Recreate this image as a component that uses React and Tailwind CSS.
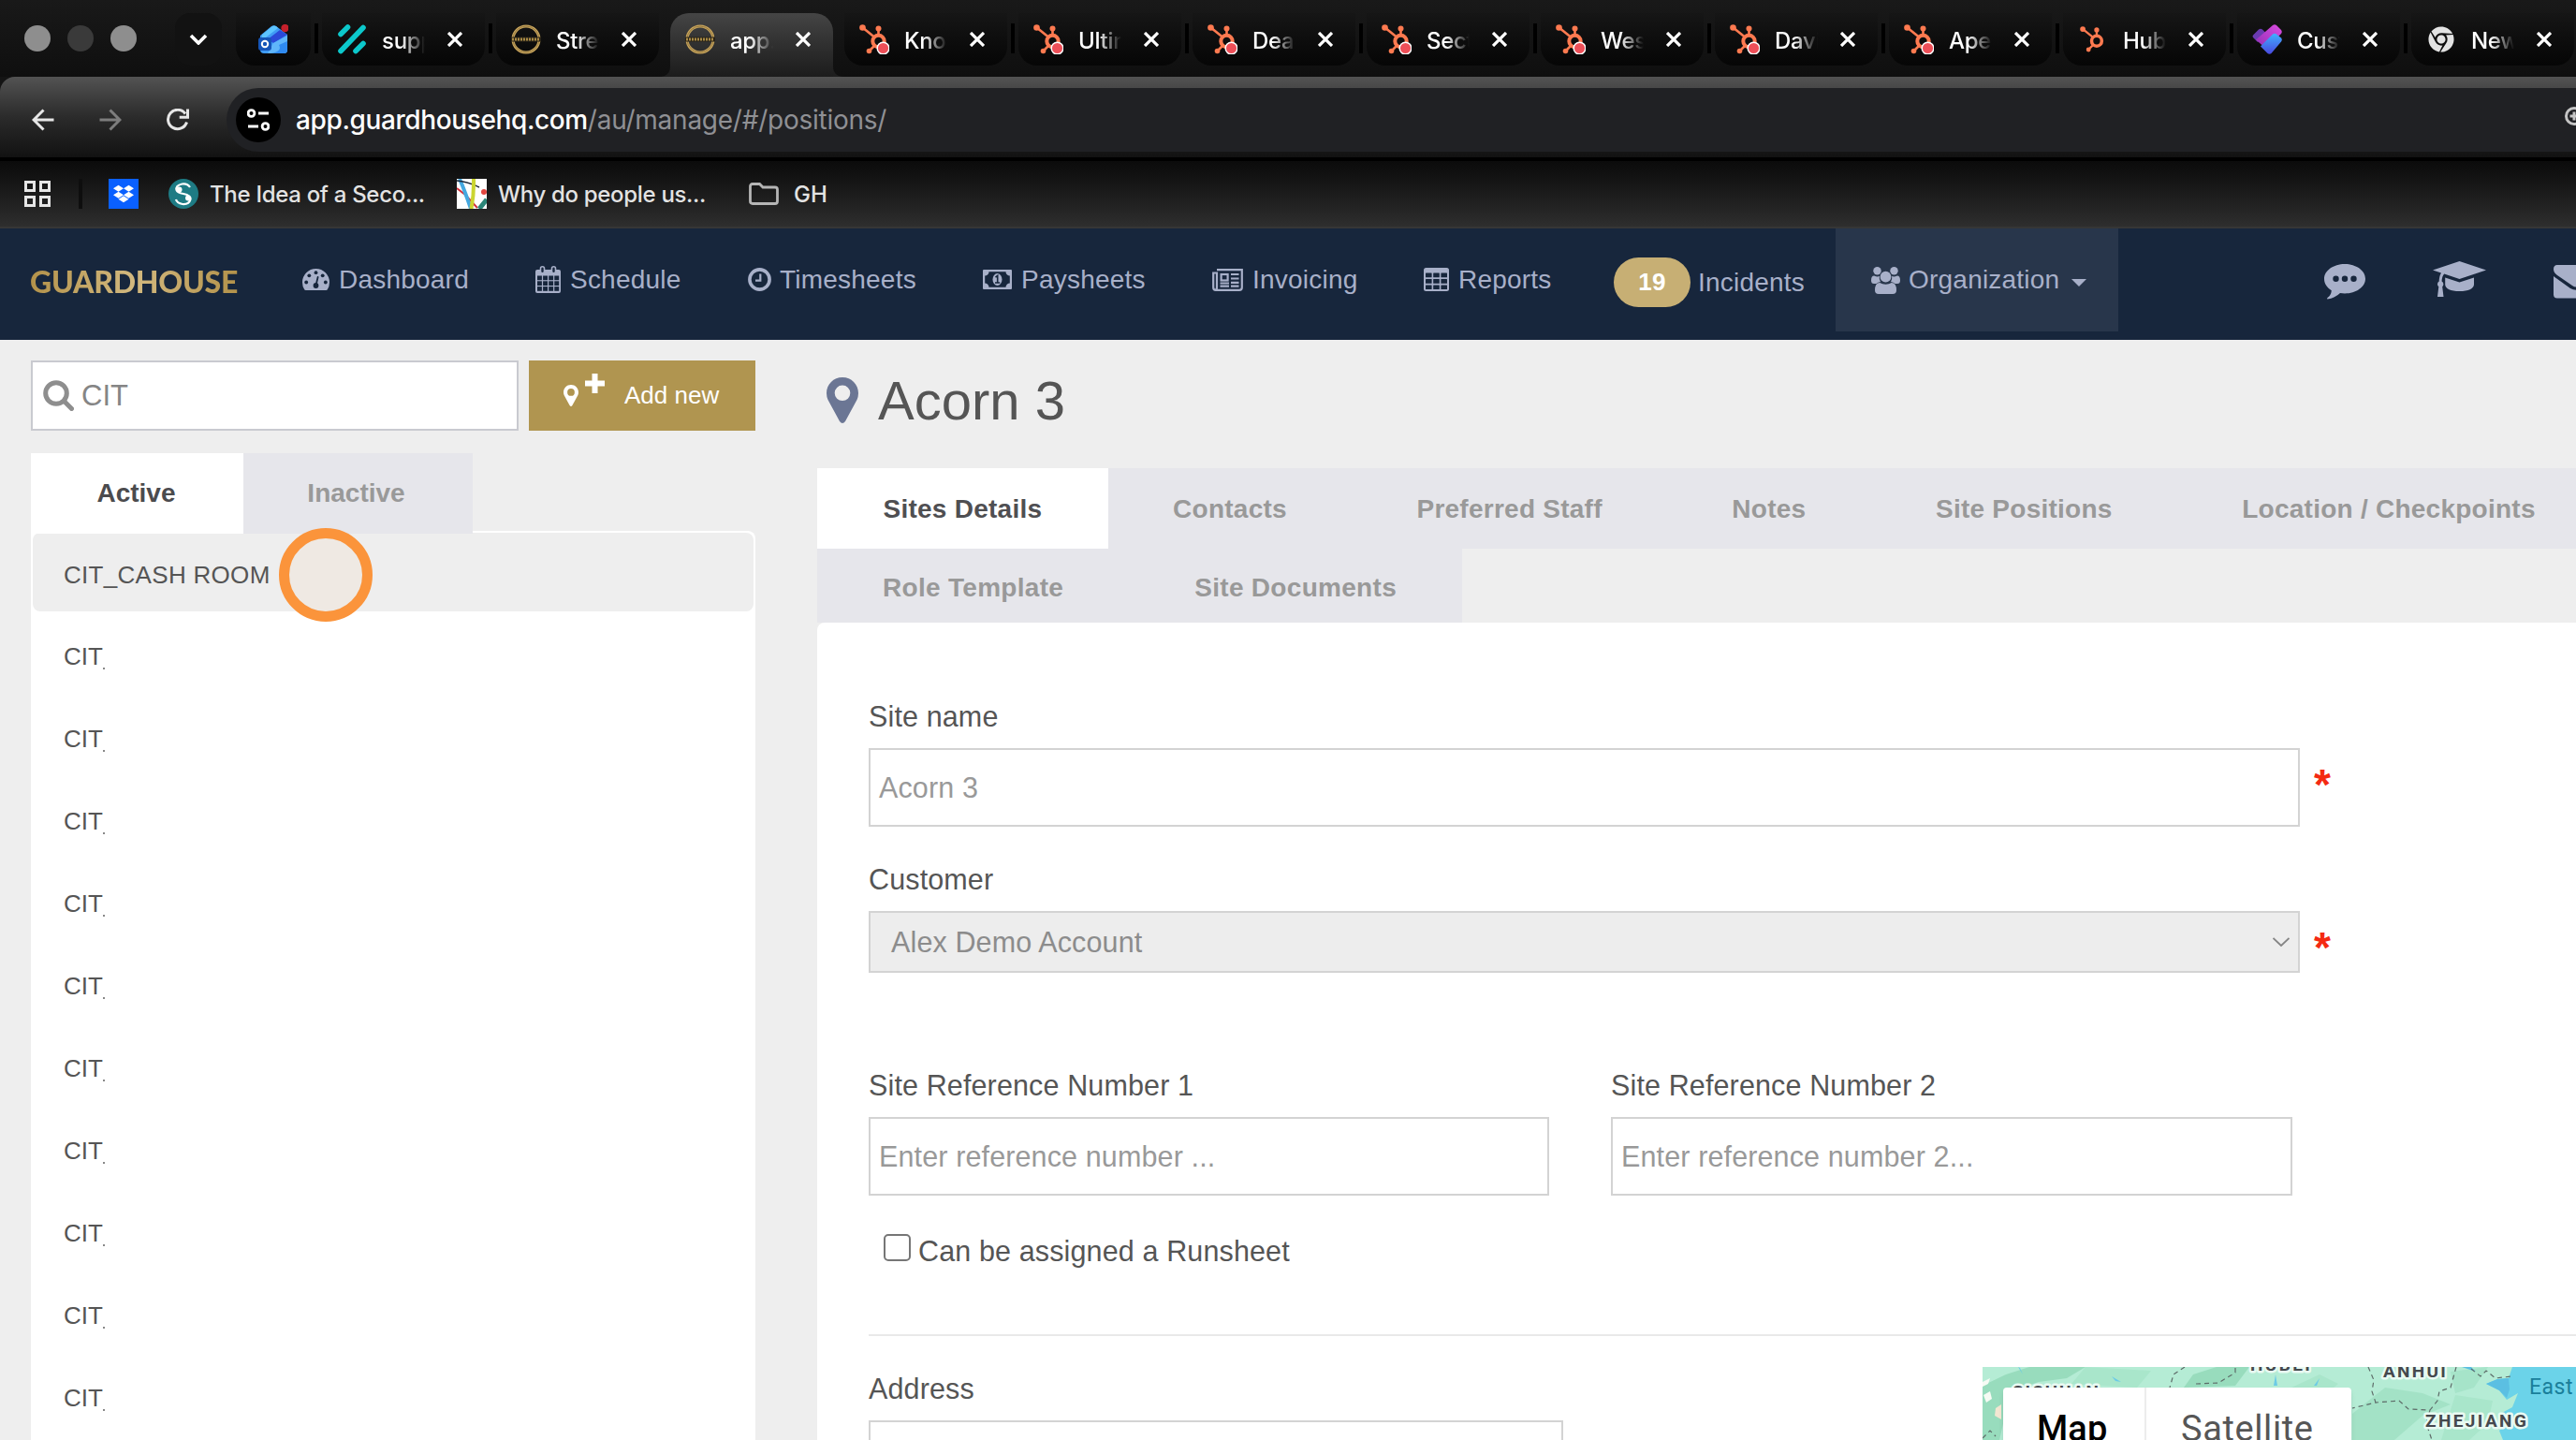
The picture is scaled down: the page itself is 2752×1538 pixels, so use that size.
import clsx from 'clsx';
import { FaChrome, FaDropbox } from 'react-icons/fa';

/* ---------- favicons ---------- */

function OutlookIcon() {
  return (
    <svg className="h-8 w-8" viewBox="0 0 32 32">
      <path d="M2 12 L14 2 Q16.500 0.500 19 2 L31 11 V27 Q31 31 27 31 H6 Q2 31 2 27Z" fill="#3f9bf5" />
      <path d="M4 11 L15 2 Q17 1 19 2 L21 4 L4 17Z" fill="#5cc4ff" />
      <path d="M10 16 L23 6 L31 11 L16 20Z" fill="#2b49d8" />
      <path d="M16 20 L31 12 V27 Q31 31 27 31 H10Z" fill="#5fb5fa" />
      <path d="M13 31 Q26 29 22 22 L31 18 V27 Q31 31 27 31Z" fill="#2f8af0" />
      <rect y="14" width="14" height="14" rx="3" fill="#1555b8" />
      <circle cx="7" cy="21" r="3.200" fill="none" stroke="#fff" strokeWidth="2" />
      <circle cx="28.500" cy="4" r="4.200" fill="#c4202b" />
    </svg>
  );
}

function SlashesIcon() {
  return (
    <svg className="h-8 w-8" viewBox="0 0 32 32" stroke="#0cc8cb" strokeWidth="5.600" strokeLinecap="round">
      <path d="M4 10.500 L11.500 3 M4 28.500 L28 3.500 M20 28.500 L28 20.500" fill="none" />
    </svg>
  );
}

function RingIcon() {
  return (
    <svg className="h-8 w-8" viewBox="0 0 32 32">
      <circle cx="16" cy="16" r="14" fill="none" stroke="#c9a55c" strokeWidth="3" />
      <circle cx="16" cy="16" r="14" fill="none" stroke="#6f5a2f" strokeWidth="0.600" />
      <rect x="0" y="13.500" width="32" height="5" fill="#2a2418" />
      <path d="M1 16 H31" stroke="#a98a45" strokeWidth="3.200" strokeDasharray="2 1" />
    </svg>
  );
}

function HubspotIcon({ unread }) {
  return (
    <svg
      className={unread ? 'h-8 w-8' : 'm-0.5 h-7 w-7'}
      viewBox="0 0 32 32"
      fill="none"
      stroke="#ff7a50"
      strokeWidth="2.600"
    >
      <circle cx="20.500" cy="18" r="6.200" strokeWidth="4" />
      <path d="M3 3 L16 13.500 M20.500 5 V12 M11 28 L16 23" />
      <circle cx="3.500" cy="3.500" r="3.300" fill="#ff7a50" stroke="none" />
      <circle cx="20.500" cy="4.500" r="3" fill="#ff7a50" stroke="none" />
      <circle cx="10.500" cy="28.500" r="2.800" fill="#ff7a50" stroke="none" />
      {unread && <circle cx="25.500" cy="25.500" r="6.300" fill="#ee4f58" stroke="#fff" strokeWidth="1.500" />}
    </svg>
  );
}

function DiamondsIcon() {
  return (
    <svg className="h-8 w-8" viewBox="0 0 32 32">
      <defs>
        <linearGradient id="dPink" x1="0" y1="1" x2="1" y2="0">
          <stop offset="0" stopColor="#8f2fb5" />
          <stop offset="1" stopColor="#dc4be0" />
        </linearGradient>
        <linearGradient id="dBlue" x1="0.500" y1="0" x2="0.500" y2="1">
          <stop offset="0" stopColor="#3fb0ff" />
          <stop offset="1" stopColor="#4a48e0" />
        </linearGradient>
      </defs>
      <path d="M1.500 11 L7 5.500 Q9 4 11 5.500 L15 9.500 L6 19 L1 14 Q-0.200 12.500 1.500 11Z" fill="#6a3bb0" />
      <path d="M22 1 Q24 -0.600 26 1 L31 6 Q32.500 8 31 10 L15 26 L4 16.500Z" fill="url(#dPink)" />
      <path d="M22 10.500 Q24 9 26 10.500 L31 14.500 Q32.500 16.500 31 18.500 L20.500 31 Q18.500 32.500 16.500 31 L9 23.500Z" fill="url(#dBlue)" />
    </svg>
  );
}

/* ---------- nav icons ---------- */

function DashboardIcon() {
  return (
    <svg className="h-[23px] w-[29px]" viewBox="0 0 29 23">
      <path d="M14.500 0 A14.500 14.500 0 0 0 0 14.500 Q0 19 2.200 22.200 Q2.700 23 3.600 23 H25.400 Q26.300 23 26.800 22.200 Q29 19 29 14.500 A14.500 14.500 0 0 0 14.500 0Z" fill="currentColor" />
      <g fill="#17263c">
        <circle cx="4.200" cy="14.500" r="1.900" />
        <circle cx="7.300" cy="7.300" r="1.900" />
        <circle cx="14.500" cy="4.200" r="1.900" />
        <circle cx="21.700" cy="7.300" r="1.900" />
        <circle cx="24.800" cy="14.500" r="1.900" />
        <circle cx="14.500" cy="18" r="2.900" />
      </g>
      <path d="M14.700 17 L16.600 9" stroke="#17263c" strokeWidth="1.800" strokeLinecap="round" />
    </svg>
  );
}

function CalendarIcon() {
  return (
    <svg className="h-[29px] w-[27px]" viewBox="0 0 27 29">
      <path d="M2 4 H25 Q27 4 27 6 V27 Q27 29 25 29 H2 Q0 29 0 27 V6 Q0 4 2 4Z" fill="currentColor" />
      <g fill="#17263c">
        {[10.5, 16.3, 22.1].map((y) =>
          [2, 8.1, 14.2, 20.3].map((x) => (
            <rect key={`${x}-${y}`} x={x} y={y} width="4.900" height="4.700" />
          ))
        )}
      </g>
      <rect x="5.500" y="0.800" width="4" height="7" rx="2" fill="#17263c" stroke="currentColor" strokeWidth="1.600" />
      <rect x="17.500" y="0.800" width="4" height="7" rx="2" fill="#17263c" stroke="currentColor" strokeWidth="1.600" />
    </svg>
  );
}

function ClockIcon() {
  return (
    <svg className="h-[25px] w-[25px]" viewBox="0 0 25 25" fill="none" stroke="currentColor">
      <circle cx="12.500" cy="12.500" r="10.600" strokeWidth="3.600" />
      <path d="M13.300 6.500 V13.700 H8" strokeWidth="2.200" />
    </svg>
  );
}

function MoneyIcon() {
  return (
    <svg className="h-[21px] w-[31px]" viewBox="0 0 31 21">
      <rect width="31" height="21" rx="1" fill="currentColor" />
      <path d="M6.500 2.200 H24.500 A4.300 4.300 0 0 0 28.800 6.500 V14.500 A4.300 4.300 0 0 0 24.500 18.800 H6.500 A4.300 4.300 0 0 0 2.200 14.500 V6.500 A4.300 4.300 0 0 0 6.500 2.200Z" fill="#17263c" />
      <ellipse cx="15.500" cy="10.500" rx="5" ry="6.500" fill="currentColor" />
      <path d="M13.500 8.200 L15.700 6.500 V13.500 M13 14 H18.200" fill="none" stroke="#17263c" strokeWidth="1.600" />
    </svg>
  );
}

function NewspaperIcon() {
  return (
    <svg className="h-[24px] w-[33px]" viewBox="0 0 33 24" fill="none" stroke="currentColor" strokeWidth="2.200">
      <path d="M5 1.200 H31.800 V20 Q31.800 22.800 29 22.800 H3.800 Q1.200 22.800 1.200 20 V4.500 H5 V20 Q5 22.800 3.200 22.800" />
      <rect x="9.600" y="6" width="7" height="6.500" />
      <path d="M20 6 H28.500 M20 10.500 H28.500 M20 14.800 H28.500 M8.500 18.600 H18 M20 18.600 H28.500 M8.500 15.500 H18" />
    </svg>
  );
}

function TableIcon() {
  return (
    <svg className="h-[25px] w-[27px]" viewBox="0 0 27 25">
      <rect width="27" height="25" rx="2.500" fill="currentColor" />
      <g fill="#17263c">
        {[5.6, 12, 18.4].map((y) =>
          [2, 10.2, 18.4].map((x) => (
            <rect key={`${x}-${y}`} x={x} y={y} width="6.600" height="4.700" rx="0.500" />
          ))
        )}
      </g>
    </svg>
  );
}

function GroupIcon() {
  return (
    <svg className="h-[29px] w-[31px]" viewBox="0 0 31 29" fill="currentColor">
      <circle cx="6.500" cy="4.200" r="4.200" />
      <circle cx="24.500" cy="4.200" r="4.200" />
      <path d="M3.200 9.500 Q7 11.500 8.800 9.800 Q8.300 13.500 10 16 Q7 16.300 5.600 18 H3 Q0 18 0 14.500 Q0 9.500 3.200 9.500Z" />
      <path d="M27.800 9.500 Q24 11.500 22.200 9.800 Q22.700 13.500 21 16 Q24 16.300 25.400 18 H28 Q31 18 31 14.500 Q31 9.500 27.800 9.500Z" />
      <circle cx="15.500" cy="10.700" r="5.900" />
      <path d="M9.200 17 Q12 18.800 15.500 18.800 Q19 18.800 21.800 17 Q27 17.200 27 25 Q27 29 23 29 H8 Q4 29 4 25 Q4 17.200 9.200 17Z" />
    </svg>
  );
}

function CommentIcon() {
  return (
    <svg className="h-[38px] w-[44px]" viewBox="0 0 44 38">
      <path d="M22 0 C34 0 44 7 44 15.800 C44 24.500 34 31.500 22 31.500 Q19.500 31.500 17 31.100 Q11.500 36.500 3.500 37.600 Q2.500 37 3.500 36 Q7.500 33 7.800 28.200 C3 25.400 0 21 0 15.800 C0 7 10 0 22 0Z" fill="currentColor" />
      <g fill="#17263c">
        <circle cx="12.500" cy="15.800" r="3.200" />
        <circle cx="22" cy="15.800" r="3.200" />
        <circle cx="31.500" cy="15.800" r="3.200" />
      </g>
    </svg>
  );
}

function CapIcon() {
  return (
    <svg className="h-[38px] w-[57px]" viewBox="0 0 57 38" fill="currentColor">
      <path d="M28.500 0 L57 9.500 L28.500 19 L12.200 13.600 Q9.800 16 9.600 21.500 Q11.400 22.500 11.400 24.500 Q11.400 26.300 10.200 27.200 L11.500 38 H5 L6.300 27.200 Q5 26.300 5 24.500 Q5 22.500 6.700 21.500 Q6.900 15.500 9 12.500 L0 9.500Z" />
      <path d="M13.200 17.500 L28.500 22.500 L44 17.500 V25 Q43 32 28.500 32 Q14 32 13.200 25Z" />
    </svg>
  );
}

function EnvelopeIcon() {
  return (
    <svg className="h-[36px] w-[48px]" viewBox="0 0 48 36" fill="currentColor">
      <path d="M4 0 H44 Q48 0 48 4 Q48 8 44 11 L28 22 Q24 25 20 22 L4 11 Q0 8 0 4.500 Q0 0 4 0Z" />
      <path d="M0 12 Q1 13 3 14.300 L18 25 Q24 28.500 30 25 L45 14.300 Q47 13 48 12 V31.500 Q48 35.500 44 35.500 H4 Q0 35.500 0 31.500Z" />
    </svg>
  );
}

function PinIcon({ className }) {
  return (
    <svg className={className} viewBox="0 0 34 49">
      <path
        fillRule="evenodd"
        d="M17 0 C26.500 0 34 7.500 34 17 Q34 20.500 32.500 24 L20 47 Q17 51 14 47 L1.500 24 Q0 20.500 0 17 C0 7.500 7.500 0 17 0Z M17 8.500 A8.300 8.300 0 1 0 17 25.100 A8.300 8.300 0 1 0 17 8.500Z"
        fill="currentColor"
      />
    </svg>
  );
}

/* ---------- browser chrome ---------- */

const hub = <HubspotIcon unread />;

const browserTabs = [
  { title: 'supp', icon: <SlashesIcon />, divider: true },
  { title: 'Stre', icon: <RingIcon /> },
  { title: 'app.', icon: <RingIcon />, active: true },
  { title: 'Kno', icon: hub, divider: true },
  { title: 'Ultim', icon: hub, divider: true },
  { title: 'Dea', icon: hub, divider: true },
  { title: 'Sect', icon: hub, divider: true },
  { title: 'Wes', icon: hub, divider: true },
  { title: 'Davi', icon: hub, divider: true },
  { title: 'Ape', icon: hub, divider: true },
  { title: 'Hub', icon: <HubspotIcon />, divider: true },
  { title: 'Cust', icon: <DiamondsIcon />, divider: true },
  { title: 'New', icon: <FaChrome className="m-0.5 h-7 w-7 text-[#e3e3e3]" /> },
];

function TabDivider({ visible }) {
  return (
    <div className="flex h-14 w-3 shrink-0 items-center justify-center">
      {visible && <div className="-mt-0.5 h-8 w-1 bg-black" />}
    </div>
  );
}

function BrowserTab({ title, icon, active }) {
  return (
    <div
      className={clsx(
        'relative flex w-[174px] shrink-0 pl-4 pt-3',
        active
          ? 'h-[68px] rounded-t-[20px] bg-linear-to-b from-[#454545] to-[#1c1c1c]'
          : 'h-14 rounded-b-[20px] bg-linear-to-b from-[#161616] to-[#060606]'
      )}
    >
      {active && (
        <>
          <svg className="absolute -left-3 bottom-0 h-3 w-3" viewBox="0 0 12 12">
            <path d="M12 0 V12 H0 Q12 12 12 0Z" fill="#1e1e1e" />
          </svg>
          <svg className="absolute -right-3 bottom-0 h-3 w-3" viewBox="0 0 12 12">
            <path d="M0 0 V12 H12 Q0 12 0 0Z" fill="#1e1e1e" />
          </svg>
        </>
      )}
      <div className="h-8 w-8 shrink-0">{icon}</div>
      <div className="ml-4 h-8 w-[46px] overflow-hidden whitespace-nowrap pt-0.5 text-[24px] font-medium leading-8 tracking-[-0.3px] text-white [mask-image:linear-gradient(to_right,black_45%,transparent)]">
        {title}
      </div>
      <svg className="ml-[24px] mt-2 h-4 w-4" viewBox="0 0 16 16" stroke="#fff" strokeWidth="3.200">
        <path d="M1 1 L15 15 M15 1 L1 15" />
      </svg>
    </div>
  );
}

function TabStrip() {
  return (
    <div className="flex h-[82px] bg-linear-to-b from-[#191919] to-[#0f0f0f] pt-3.5">
      <div className="ml-[26px] flex h-14 w-[120px] shrink-0 items-center justify-between">
        <div className="-mt-0.5 h-7 w-7 rounded-full bg-[#8e8e8e]" />
        <div className="-mt-0.5 h-7 w-7 rounded-full bg-[#3a3a3a]" />
        <div className="-mt-0.5 h-7 w-7 rounded-full bg-[#8e8e8e]" />
      </div>
      <div className="ml-[41px] flex h-14 w-[50px] shrink-0 items-center justify-center rounded-2xl bg-[#121212]">
        <svg className="h-3 w-5" viewBox="0 0 20 12" fill="none" stroke="#fff" strokeWidth="3.600">
          <path d="M2 2 L10 10 L18 2" />
        </svg>
      </div>
      <div className="ml-[15px] flex h-14 w-20 shrink-0 justify-center rounded-b-[20px] bg-linear-to-b from-[#161616] to-[#060606] pt-3">
        <OutlookIcon />
      </div>
      <TabDivider visible />
      {browserTabs.map((tab) => (
        <div key={tab.title} className="flex">
          <BrowserTab {...tab} />
          <TabDivider visible={tab.divider} />
        </div>
      ))}
    </div>
  );
}

function Toolbar() {
  return (
    <div className="h-[86px] bg-[#141414]">
      <div className="flex h-full rounded-tl-[16px] bg-linear-to-b from-[#535353] via-[#2b2b2b] to-[#121212] pt-3">
        <div className="flex h-[68px] w-[242px] shrink-0 items-center pl-[34px]">
          <svg className="h-6 w-6" viewBox="0 0 24 24" fill="none" stroke="#e6e6e6" strokeWidth="3">
            <path d="M23.500 12 H2 M12.500 1.500 L2 12 L12.500 22.500" />
          </svg>
          <svg className="ml-12 h-6 w-6" viewBox="0 0 24 24" fill="none" stroke="#7d7d7d" strokeWidth="3">
            <path d="M0.500 12 H22 M11.500 1.500 L22 12 L11.500 22.500" />
          </svg>
          <svg className="ml-12 h-6 w-6" viewBox="0 0 24 24" fill="none" stroke="#e6e6e6" strokeWidth="3">
            <path d="M21.500 14.500 A10.200 10.200 0 1 1 20 5.500" />
            <path d="M22.500 0.500 V9.300 H13.700" />
          </svg>
        </div>
        <div className="flex h-[68px] flex-1 items-center overflow-hidden rounded-l-full bg-[#202124] pl-2.5">
          <div className="flex h-12 w-12 shrink-0 items-center justify-center rounded-full bg-black">
            <svg className="h-6 w-6" viewBox="0 0 24 24" fill="none" stroke="#fff" strokeWidth="2.800">
              <circle cx="4.500" cy="5" r="3.400" />
              <path d="M12 5 H23 M1 19 H12" />
              <circle cx="19.500" cy="19" r="3.400" />
            </svg>
          </div>
          <div className="ml-4 whitespace-nowrap text-[28px] leading-9 text-[#8f9094]">
            <span className="font-medium tracking-[-0.38px] text-white">app.guardhousehq.com</span>
            <span className="tracking-[-0.25px]">/au/manage/#/positions/</span>
          </div>
          <svg className="-mr-4 -mt-1 ml-auto h-7 w-7 shrink-0" viewBox="0 0 28 28" fill="none" stroke="#c4c4c4" strokeWidth="3">
            <circle cx="10" cy="12" r="8.500" />
            <path d="M10 7.500 V16.500 M5.500 12 H14.500 M16 18 L25 27" />
          </svg>
        </div>
      </div>
    </div>
  );
}

function BookmarkBar() {
  return (
    <div className="flex h-[76px] items-center border-b-2 border-t-4 border-b-[#363636] border-t-black bg-linear-to-b from-[#0b0b0b] to-[#2e2e2e] text-[24px] font-medium text-[#e3e3e3]">
      <div className="ml-[26px] grid w-7 grid-cols-2 gap-1">
        <div className="h-3 w-3 border-3 border-[#e6e6e6]" />
        <div className="h-3 w-3 border-3 border-[#e6e6e6]" />
        <div className="h-3 w-3 border-3 border-[#e6e6e6]" />
        <div className="h-3 w-3 border-3 border-[#e6e6e6]" />
      </div>
      <div className="ml-[30px] h-8 w-1 bg-[#0e0e0e]" />
      <div className="ml-7 flex h-8 w-8 items-center justify-center bg-[#0a60ff]">
        <FaDropbox className="h-[22px] w-[22px] text-white" />
      </div>
      <div className="ml-8 flex w-[308px] items-center">
        <svg className="h-8 w-8 shrink-0" viewBox="0 0 32 32">
          <circle cx="16" cy="16" r="16" fill="#1e7b84" />
          <path d="M23 9 Q20 4.500 14.500 5.500 Q7.500 7 8.500 12 Q9.500 15 16 16 Q24 17.500 23.500 22 Q22 27.500 15 27 Q9 26 8 22" fill="none" stroke="#fff" strokeWidth="2.200" />
          <circle cx="11.500" cy="11.500" r="3" fill="#fff" />
          <circle cx="21" cy="20.500" r="3" fill="#fff" />
        </svg>
        <span className="ml-3 whitespace-nowrap pt-0.5 tracking-[-0.3px]">The Idea of a Seco...</span>
      </div>
      <div className="flex w-[312px] items-center">
        <svg className="h-8 w-8 shrink-0" viewBox="0 0 32 32">
          <rect width="32" height="32" fill="#fff" />
          <path d="M0 10 L9 17 L22 31" stroke="#d6303a" strokeWidth="2" fill="none" />
          <path d="M3 0 Q9 14 15 32" stroke="#45a8e0" strokeWidth="4" fill="none" />
          <path d="M0 2 Q12 3 24 9" stroke="#1c2536" strokeWidth="1.400" fill="none" />
          <path d="M18 0 Q18.500 16 15.500 32" stroke="#cbd531" strokeWidth="4" fill="none" />
          <path d="M32 22 L24 32" stroke="#2b8577" strokeWidth="5" />
          <circle cx="29" cy="14" r="3" fill="#e2463f" />
        </svg>
        <span className="ml-3 whitespace-nowrap pt-0.5 tracking-[-0.32px]">Why do people us...</span>
      </div>
      <svg className="h-6 w-8 shrink-0" viewBox="0 0 32 24" fill="none" stroke="#b5b5b5" strokeWidth="2.800">
        <path d="M4 1.500 H11.500 L15 5 H28 Q30.500 5 30.500 7.500 V20 Q30.500 22.500 28 22.500 H4 Q1.500 22.500 1.500 20 V4 Q1.500 1.500 4 1.500Z" />
      </svg>
      <span className="ml-4 pt-0.5">GH</span>
    </div>
  );
}

/* ---------- app ---------- */

function NavItem({ icon, label, width, iconWidth }) {
  return (
    <div className={clsx('flex h-[109px] shrink-0 items-center', width)}>
      <div className={clsx('shrink-0', iconWidth)}>{icon}</div>
      <span className="whitespace-nowrap">{label}</span>
    </div>
  );
}

function NavBar() {
  return (
    <div className="flex h-[119px] overflow-hidden bg-[#17263c] font-['Liberation_Sans',sans-serif] text-[28px] tracking-[0.22px] text-[#a8b0c9]">
      <div className="flex h-[114px] w-[323px] shrink-0 items-center pl-8">
        <span className="bg-linear-to-r from-[#b3924a] via-[#d3b97f] to-[#b3924a] bg-clip-text font-['Lato',sans-serif] text-[32px] font-black tracking-[-0.25px] text-transparent">
          GUARDHOUSE
        </span>
      </div>
      <NavItem icon={<DashboardIcon />} label="Dashboard" width="w-[249px]" iconWidth="w-[39px]" />
      <NavItem icon={<CalendarIcon />} label="Schedule" width="w-[227px]" iconWidth="w-[37px]" />
      <NavItem icon={<ClockIcon />} label="Timesheets" width="w-[251px]" iconWidth="w-[34px]" />
      <NavItem icon={<MoneyIcon />} label="Paysheets" width="w-[245px]" iconWidth="w-[41px]" />
      <NavItem icon={<NewspaperIcon />} label="Invoicing" width="w-[226px]" iconWidth="w-[43px]" />
      <NavItem icon={<TableIcon />} label="Reports" width="w-[203px]" iconWidth="w-[37px]" />
      <div className="flex h-[115px] w-[237px] shrink-0 items-center">
        <span className="flex h-[53px] w-[82px] items-center justify-center rounded-[27px] bg-[#c7af74] text-[26px] font-bold text-white">
          19
        </span>
        <span className="ml-2">Incidents</span>
      </div>
      <div className="flex h-[110px] w-[302px] shrink-0 items-center bg-[#28364b] pl-[38px]">
        <GroupIcon />
        <span className="ml-[9px]">Organization</span>
        <svg className="ml-[13px] mt-1.5 h-2 w-4" viewBox="0 0 16 8">
          <path d="M0 0 H16 L8 8Z" fill="currentColor" />
        </svg>
      </div>
      <div className="flex h-[114px] w-[600px] shrink-0 items-center pl-[220px]">
        <div className="w-[116px]">
          <CommentIcon />
        </div>
        <div className="-mt-1.5 w-[129px]">
          <CapIcon />
        </div>
        <EnvelopeIcon />
      </div>
    </div>
  );
}

const sites = ['CIT', 'CIT', 'CIT', 'CIT', 'CIT', 'CIT', 'CIT', 'CIT', 'CIT', 'CIT'];

function Sidebar() {
  return (
    <div className="w-[774px] shrink-0">
      <div className="flex gap-[11px]">
        <div className="flex h-[75px] w-[521px] items-center border-2 border-[#c9cad0] bg-white pl-[11px] text-[31px] text-[#858585]">
          <svg className="h-[33px] w-[33px]" viewBox="0 0 33 33" fill="none" stroke="#8e8e8e">
            <circle cx="14" cy="14" r="11.300" strokeWidth="5" />
            <path d="M22.500 22.500 L30.500 30.500" strokeWidth="5" strokeLinecap="round" />
          </svg>
          <span className="ml-2 pt-0.5">CIT</span>
        </div>
        <button type="button" className="flex h-[75px] w-[242px] items-center bg-[#b09550] pl-[37px] text-[26px] text-white">
          <PinIcon className="h-[23px] w-4" />
          <svg className="-mt-[26px] ml-[7px] h-[21px] w-[21px]" viewBox="0 0 21 21" stroke="#fff" strokeWidth="6">
            <path d="M10.500 0 V21 M0 10.500 H21" />
          </svg>
          <span className="ml-[21px]">Add new</span>
        </button>
      </div>

      <div className="relative z-10 mt-6 flex h-[83px] text-[28px] font-bold">
        <div className="flex h-[86px] w-[227px] items-center justify-center bg-white pr-0.5 text-[#4b4b4e]">
          Active
        </div>
        <div className="flex h-[86px] w-[245px] items-center justify-center bg-[#e6e6eb] pr-1 text-[#999]">
          Inactive
        </div>
      </div>

      <div className="h-[980px] rounded-tr-lg bg-white p-0.5 text-[26px] text-[#555]">
        <div className="relative flex h-[84px] items-center rounded-lg bg-[#eee] pl-[33px] pt-1.5">
          <span className="tracking-[0.3px]">CIT_CASH ROOM</span>
          <div className="absolute left-[263px] top-[-5px] z-20 h-[100px] w-[100px] rounded-full border-[11px] border-[#fb943b] bg-[#fb943b]/6" />
        </div>
        {sites.map((name, i) => (
          <div key={i} className="flex h-[88px] items-center pl-[33px] pt-[9px]">
            <span>{name}</span>
            <span className="mt-6 h-0.5 w-0.5 bg-[#888]" />
          </div>
        ))}
      </div>
    </div>
  );
}

const topTabs = ['Sites Details', 'Contacts', 'Preferred Staff', 'Notes', 'Site Positions', 'Location / Checkpoints'];
const bottomTabs = ['Role Template', 'Site Documents'];

function Required() {
  return (
    <span className="ml-[15px] h-[34px] text-[46px] font-bold leading-[54px] text-[#f42a12]">*</span>
  );
}

function MapPreview() {
  return (
    <div className="relative h-[78px] w-[634px] shrink-0 overflow-hidden bg-[#b5ecd5] font-['Roboto',sans-serif]">
      <svg className="absolute inset-0 h-[78px] w-[634px]" viewBox="0 0 634 78">
        <g fill="#98dcbd">
          <path d="M0 20 L25 8 L50 0 H110 L90 12 L60 16 L30 26 L18 78 H0Z" />
          <path d="M215 22 L225 8 L250 0 H285 L270 20Z" />
          <path d="M395 50 L430 22 L470 28 L500 40 L470 52 L440 78 H395Z" opacity=".6" />
          <path d="M500 5 L540 0 L525 22 L505 28Z" opacity=".5" />
        </g>
        <g fill="#a9e6cb">
          <path d="M110 0 L180 4 L165 22 L95 18Z" />
          <path d="M330 22 L360 8 L380 18 L375 22Z" />
          <path d="M505 30 L545 36 L540 60 L520 78 H490Z" />
        </g>
        <path d="M0 16 L8 12 L6 18 L0 21Z M1 30 L8 26 L10 34 L4 38Z" fill="#f6fbf4" />
        <path d="M14 44 L20 40 V56 L13 52Z" fill="#f3e6d2" />
        <path d="M566 0 L562 12 L550 13 L538 18 L552 25 L560 35 L572 28 L566 43 L553 50 L560 60 L552 68 L556 78 H634 V0Z" fill="#6bd3e9" />
        <path d="M562 12 L550 13 L538 18 L552 25 L560 33 L563 24Z M380 38 L384 52 L379 60 L388 62 L393 54 L386 50Z M512 0 H522 L527 5Z" fill="#5bbfe2" />
        <g fill="#6ccbe6">
          <path d="M38 0 L43 8 L40 1Z M138 10 L148 16 L142 15Z M313 8 L315 20 L311 20Z M354 20 L360 12 L357 20Z M365 70 L372 66 L369 74Z" />
        </g>
        <g fill="none" stroke="#5d6b68" strokeWidth="1.200" strokeDasharray="5 4">
          <path d="M216 0 L204 8 L200 22 M228 18 L252 17 L270 6 V0 M412 0 L418 14 L416 26 L420 38 L395 44" />
          <path d="M506 0 L500 22 L488 26 L486 36 L478 46 L455 45 L445 36 L420 38 M478 46 L474 60 L480 78 M522 2 L532 10 L538 4 L548 12 L565 10" />
          <path d="M0 76 L8 68 L14 74" />
        </g>
        <g fill="#45494e" stroke="#e9faf2" strokeWidth="5" strokeLinejoin="round" paintOrder="stroke" fontFamily="Roboto" fontWeight="700" fontSize="19">
          <text x="32" y="33" textLength="92">SICHUAN</text>
          <text x="286" y="4" textLength="64">HUBEI</text>
          <text x="428" y="11" textLength="67">ANHUI</text>
          <text x="473" y="64" textLength="108">ZHEJIANG</text>
        </g>
        <text x="584" y="29" fill="#1a7f9b" fontFamily="Roboto" fontSize="23" letterSpacing="0.500">East</text>
      </svg>
      <div className="absolute left-[22px] top-[22px] flex h-20 w-[372px] rounded bg-white text-[38px] leading-[42px] shadow-md">
        <div className="w-[153px] border-r-2 border-[#ececec] pl-[36px] pt-[23px] font-medium text-black">Map</div>
        <div className="pl-[37px] pt-[23px] tracking-[0.6px] text-[#565656]">Satellite</div>
      </div>
    </div>
  );
}

function SiteDetails() {
  return (
    <div className="ml-[66px] w-[1879px] shrink-0">
      <div className="flex h-[115px] pl-2.5 pt-[18px]">
        <PinIcon className="h-[49px] w-[34px] text-[#6b7694]" />
        <h1 className="ml-[21px] mt-[-7px] text-[58px] leading-[64px] text-[#555]">Acorn 3</h1>
      </div>
      <div className="flex h-[86px] bg-[#e6e6eb] text-[28px] font-bold text-[#999]">
        {topTabs.map((tab, i) => (
          <div
            key={tab}
            className={clsx(
              'flex shrink-0 items-center whitespace-nowrap pt-px tracking-[0.25px]',
              i === 0 ? 'bg-white px-[70.500px] text-[#4f4f52]' : 'px-[69.300px]'
            )}
          >
            {tab}
          </div>
        ))}
      </div>
      <div className="flex h-[79px] w-[689px] bg-[#e6e6eb] text-[28px] font-bold text-[#999]">
        {bottomTabs.map((tab) => (
          <div key={tab} className="flex items-center whitespace-nowrap px-[70px] pt-1 tracking-[0.3px]">
            {tab}
          </div>
        ))}
      </div>

      <div className="h-[900px] rounded-tl-lg bg-white pl-[55px] pt-[82px] text-[30.5px] leading-9 tracking-[0.13px] text-[#555]">
        <label className="block h-[52px]">Site name</label>
        <div className="flex">
          <div className="flex h-[84px] w-[1529px] items-center border-2 border-[#d3d3d3] pl-[9px] text-[#999]">
            Acorn 3
          </div>
          <div className="mt-3 flex">
            <Required />
          </div>
        </div>
        <label className="mt-[38px] block h-[52px]">Customer</label>
        <div className="flex">
          <div className="flex h-[66px] w-[1529px] items-center justify-between border-2 border-[#d3d3d3] bg-[#ededed] pl-[22px] pr-[9px] text-[#8c8c8c]">
            Alex Demo Account
            <svg className="h-2.5 w-[18px]" viewBox="0 0 18 10" fill="none" stroke="#858585" strokeWidth="1.800">
              <path d="M0.500 1 L9 9 L17.500 1" />
            </svg>
          </div>
          <div className="mt-3 flex">
            <Required />
          </div>
        </div>
        <div className="mt-[102px] flex gap-[66px]">
          <div className="w-[727px]">
            <label className="block h-[52px]">Site Reference Number 1</label>
            <div className="flex h-[84px] items-center border-2 border-[#d3d3d3] pl-[9px] text-[#999]">
              Enter reference number ...
            </div>
          </div>
          <div className="w-[728px]">
            <label className="block h-[52px]">Site Reference Number 2</label>
            <div className="flex h-[84px] items-center border-2 border-[#d3d3d3] pl-[9px] text-[#999]">
              Enter reference number 2...
            </div>
          </div>
        </div>
        <div className="mt-[41px] flex h-[36px] pl-4">
          <div className="h-[29px] w-[29px] rounded-[5px] border-2 border-[#767676]" />
          <span className="ml-[8px]">Can be assigned a Runsheet</span>
        </div>
        <div className="mt-[71px] h-0.5 bg-[#e9e9e9]" />
        <div className="flex h-[113px] justify-between">
          <div className="w-[742px] pt-[38px]">
            <label className="block h-[52px]">Address</label>
            <div className="h-[84px] border-2 border-[#d3d3d3]" />
          </div>
          <div className="pt-[33px]">
            <MapPreview />
          </div>
        </div>
      </div>
    </div>
  );
}

export default function App() {
  return (
    <div className="h-[1538px] w-[2752px] overflow-hidden bg-[#eee] font-['Inter',sans-serif]">
      <TabStrip />
      <Toolbar />
      <BookmarkBar />
      <NavBar />
      <div className="flex pl-[33px] pt-[22px] font-['Liberation_Sans',sans-serif]">
        <Sidebar />
        <SiteDetails />
      </div>
    </div>
  );
}
